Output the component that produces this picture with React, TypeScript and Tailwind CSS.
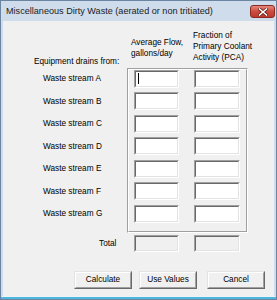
import React from "react";

function Field({ w, disabled, cursor }: { w: number; disabled?: boolean; cursor?: boolean }) {
  return (
    <div
      className={`relative h-full border border-t-[#a0a0a0] border-l-[#a0a0a0] border-r-white border-b-white ${
        disabled ? "bg-[#f0f0f0]" : "bg-white"
      }`}
      style={{ width: w }}
    >
      <div className="h-full w-full border border-t-[#696969] border-l-[#696969] border-r-[#e3e3e3] border-b-[#e3e3e3]">
        {cursor && <div className="ml-[2px] mt-[1px] h-[11px] w-px bg-black" />}
      </div>
    </div>
  );
}

function Btn({ label }: { label: string }) {
  return (
    <div className="w-[58px] h-[18px] border border-t-[#e3e3e3] border-l-[#e3e3e3] border-r-[#696969] border-b-[#696969] bg-[#f0f0f0]">
      <div className="h-full w-full border border-t-white border-l-white border-r-[#a0a0a0] border-b-[#a0a0a0] flex items-center justify-center text-[8.25px] leading-none text-black">
        {label}
      </div>
    </div>
  );
}

export default function App() {
  const rows = ["A", "B", "C", "D", "E", "F", "G"];
  return (
    <div
      className="w-[277px] h-[300px] border border-[#6b84a2] bg-[#cfdcec] flex flex-col overflow-hidden"
      style={{ fontFamily: '"Liberation Sans", Arial, sans-serif' }}
    >
      {/* title bar */}
      <div className="h-[20px] flex items-center justify-between relative">
        <div className="pl-[5px] pt-[1px] text-[9.1px] text-[#1b1b1b] leading-none whitespace-nowrap">
          Miscellaneous Dirty Waste (aerated or non tritiated)
        </div>
        <div className="mr-[1px] mt-[2px] w-[25px] h-[13px] rounded-[3px] border border-[#8a2a22] bg-gradient-to-b from-[#e5877c] via-[#cc4b3f] to-[#c0392d] flex items-center justify-center">
          <svg width="10" height="8" viewBox="0 0 10 8">
            <path d="M1.5 1 L8.5 7 M8.5 1 L1.5 7" stroke="#5a1a14" strokeWidth="3" strokeLinecap="square" />
            <path d="M1.5 1 L8.5 7 M8.5 1 L1.5 7" stroke="#ffffff" strokeWidth="1.6" strokeLinecap="square" />
          </svg>
        </div>
      </div>

      {/* client area */}
      <div className="mx-[2px] h-[276px] bg-[#f0f0f0] text-[8.25px] text-black leading-[11px]">
        {/* headers */}
        <div className="flex h-[47px]">
          <div className="w-[128px] pl-[31px] pt-[35.5px] whitespace-nowrap">Equipment drains from:</div>
          <div className="w-[62px] pt-[16.5px] whitespace-nowrap">
            <div>Average Flow,</div>
            <div>gallons/day</div>
          </div>
          <div className="pt-[9.5px] whitespace-nowrap">
            <div>Fraction of</div>
            <div>Primary Coolant</div>
            <div>Activity (PCA)</div>
          </div>
        </div>

        {/* rows */}
        <div className="flex">
          <div className="w-[124px] pl-[40px] pt-[2px] flex flex-col gap-[4.5px]">
            {rows.map((r) => (
              <div key={r} className="h-[18px] flex items-center whitespace-nowrap">
                Waste stream {r}
              </div>
            ))}
          </div>
          <div className="w-[121px] h-[165px] border border-t-[#a0a0a0] border-l-[#a0a0a0] border-r-white border-b-white">
            <div className="h-full w-full border border-t-white border-l-white border-r-[#a0a0a0] border-b-[#a0a0a0] pl-[5px] flex flex-col gap-[4.5px]">
              {rows.map((r, i) => (
                <div key={r} className="h-[18px] flex gap-[15px]">
                  <Field w={45} cursor={i === 0} />
                  <Field w={46} />
                </div>
              ))}
            </div>
          </div>
        </div>

        {/* total */}
        <div className="flex mt-[2px] h-[17px]">
          <div className="w-[131px] pl-[96px] flex items-center">Total</div>
          <div className="flex gap-[15px] h-full">
            <Field w={45} disabled />
            <Field w={46} disabled />
          </div>
        </div>

        {/* buttons */}
        <div className="flex mt-[19px] pl-[71px]">
          <Btn label="Calculate" />
          <div className="ml-[7px]">
            <Btn label="Use Values" />
          </div>
          <div className="ml-[10px]">
            <Btn label="Cancel" />
          </div>
        </div>
      </div>

      {/* bottom frame */}
      <div className="h-px mx-[1px] bg-[#eef3f8]" />
      <div className="h-[2px] bg-[#4cb6dc]" />
    </div>
  );
}
